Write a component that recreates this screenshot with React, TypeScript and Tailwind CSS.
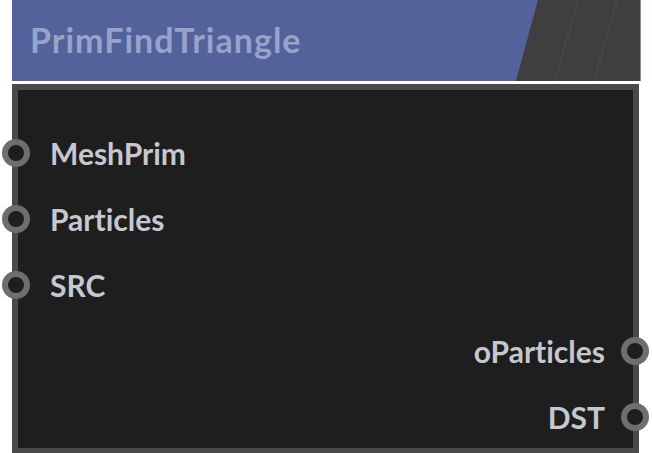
import React from "react";

const Port = ({ side }: { side: "l" | "r" }) => (
  <div
    className={
      "w-[28px] h-[28px] rounded-full border-[6px] border-[#6e6e6e] bg-[#1e1e1e] shrink-0 " +
      (side === "l" ? "-ml-[16px]" : "-mr-[16px]")
    }
  />
);

export default function App() {
  const font = { fontFamily: "Lato, 'Open Sans', sans-serif" };
  return (
    <div className="w-[652px] h-[453px] bg-white overflow-hidden [font-variant-ligatures:none]" style={font}>
      <div className="ml-[12px] w-[629px] h-[81px] bg-[#53629a] relative flex items-center border-r border-[#8a90a8]">
        <svg className="absolute inset-0" width="628" height="81" viewBox="0 0 628 81">
          <polygon points="526,0 628,0 628,81 504,81" fill="#3f3f3f" />
          <line x1="566" y1="0" x2="543" y2="81" stroke="#4b4b4b" strokeWidth="1.2" />
          <line x1="605" y1="0" x2="582" y2="81" stroke="#4b4b4b" strokeWidth="1.2" />
        </svg>
        <span className="relative pl-[18px] text-[34px] tracking-[1px] font-bold text-[#98a3c9] leading-none pb-[1px]">
          PrimFindTriangle
        </span>
      </div>
      <div className="mt-[3px] ml-[12px] w-[627px] h-[370px] border-[6px] border-[#4a4a4a] bg-[#1e1e1e] pt-[30px]">
        {["MeshPrim", "Particles", "SRC"].map((t) => (
          <div key={t} className="h-[66px] flex items-center">
            <Port side="l" />
            <span className="ml-[20px] text-[30px] font-bold text-[#c5c8cf] leading-none">{t}</span>
          </div>
        ))}
        {["oParticles", "DST"].map((t) => (
          <div key={t} className="h-[66px] flex items-center justify-end">
            <span className="mr-[16px] text-[30px] font-bold text-[#c5c8cf] leading-none">{t}</span>
            <Port side="r" />
          </div>
        ))}
      </div>
    </div>
  );
}
